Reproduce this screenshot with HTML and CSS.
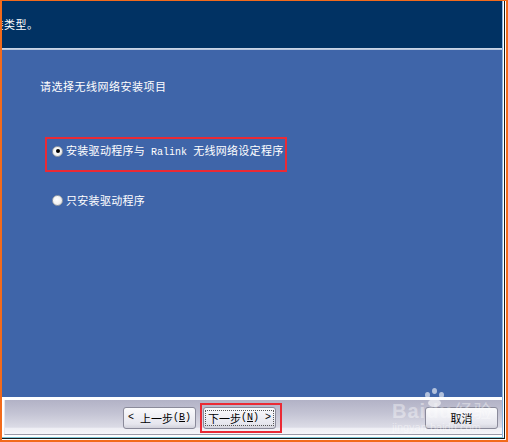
FILE: index.html
```html
<!DOCTYPE html>
<html lang="zh-CN">
<head>
<meta charset="utf-8">
<title>安装类型</title>
<link rel="stylesheet" href="styles.css">
</head>
<body>
<div class="window">
  <div class="edge1">
    <div class="edge2">
      <div class="edge3">
        <div class="panel">
          <div class="header"><span class="title">安装类型。</span></div>
          <div class="sep"></div>
          <div class="content">
            <p class="prompt">请选择无线网络安装项目</p>
            <label class="option first">
              <span class="radio checked"></span>
              <span class="label">安装驱动程序与<span class="mono"> Ralink </span>无线网络设定程序</span>
            </label>
            <label class="option second">
              <span class="radio"></span>
              <span class="label">只安装驱动程序</span>
            </label>
          </div>
          <div class="footer">
            <div class="bar">
              <button class="btn back"><span class="m">&lt; </span>上一步<span class="m">(<u>B</u>)</span></button>
              <button class="btn next"><span class="focus">下一步<span class="m">(<u>N</u>) &gt;</span></span></button>
              <button class="btn cancel">取消</button>
            </div>
          </div>
        </div>
      </div>
    </div>
  </div>
  <div class="mark mark-option"></div>
  <div class="mark mark-next"></div>
  <div class="watermark">
    <div class="paw"><i class="t1"></i><i class="t2"></i><i class="t3"></i><i class="pad"></i></div>
    <div class="wm-main">Bai<span class="du">du</span><span class="wm-cn">经验</span></div>
    <div class="wm-url">jingyan.baidu.com</div>
  </div>
</div>
</body>
</html>
```

FILE: styles.css
```css
* { box-sizing: border-box; }
html, body { margin: 0; padding: 0; }
body {
  width: 508px;
  height: 442px;
  overflow: hidden;
  background: #fff;
  font-family: "Noto Sans CJK SC", "Liberation Sans", sans-serif;
}
.window {
  position: relative;
  width: 508px;
  height: 442px;
  border-style: solid;
  border-color: #f26a1b;
  border-width: 1px 2px 2px 2px;
  display: flex;
}
.edge1 {
  flex: 1;
  display: flex;
  border-right: 1px solid #ffffff;
  border-bottom: 1px solid #ffffff;
}
.edge2 {
  flex: 1;
  display: flex;
  border-right: 1px solid #1a1a1a;
  border-bottom: 1px solid #1a1a1a;
}
.edge3 {
  flex: 1;
  display: flex;
  border-right: 1px solid #ffffff;
  border-bottom: 1px solid #7cc4d4;
}
.panel {
  flex: 1;
  display: flex;
  flex-direction: column;
  border-right: 1px solid #8ab6de;
  min-width: 0;
}
.header {
  height: 47px;
  background: #013263;
  overflow: hidden;
  padding-top: 15px;
}
.title {
  display: block;
  text-indent: -21px;
  color: #fff;
  font-size: 11px;
  letter-spacing: 0.5px;
  line-height: 16px;
  white-space: nowrap;
}
.sep {
  height: 2px;
  background: linear-gradient(#d2dcea, #aebfd8);
}
.content {
  height: 347px;
  background: #3f65a9;
  padding: 29px 0 0 38px;
  color: #fff;
}
.prompt {
  margin: 0;
  font-size: 11px;
  letter-spacing: 0.5px;
  line-height: 14px;
}
.option {
  display: flex;
  align-items: center;
  height: 14px;
  margin-left: 12px;
  font-size: 11px;
  line-height: 14px;
  letter-spacing: 0.3px;
}
.option.first { margin-top: 51px; }
.option.second { margin-top: 35px; }
.radio {
  width: 11px;
  height: 11px;
  border-radius: 50%;
  background: radial-gradient(circle at 40% 40%, #ffffff 0%, #f2f2f2 55%, #d4d4d4 100%);
  border: 1px solid #9aa0a8;
  margin-right: 3px;
  position: relative;
  flex: none;
}
.radio.checked::after {
  content: "";
  position: absolute;
  left: 2.5px;
  top: 2.5px;
  width: 4px;
  height: 4px;
  border-radius: 50%;
  background: #000;
}
.label { white-space: nowrap; }
.mono {
  font-family: "Liberation Mono", monospace;
  font-size: 10px;
  letter-spacing: 0;
  white-space: pre;
}
.footer {
  height: 40px;
  background: #ffffff;
  padding: 3px 0 2px 2px;
}
.bar {
  height: 35px;
  border-bottom: 1px solid #9a9aa8;
  background: linear-gradient(#b2b2c6 0%, #c4c4d4 40%, #dcdce6 80%, #eeeef4 83%, #f6f6fa 100%);
  display: flex;
  align-items: flex-start;
  padding: 7px 0 0 118px;
  gap: 7px;
  border-left: 1px solid #e6e6ee;
}
.btn {
  width: 73px;
  height: 22px;
  margin: 0;
  padding: 0;
  border: 1px solid #8a8a9a;
  border-radius: 3px;
  background: linear-gradient(#fafafc, #e6e6ee 80%, #d2d2dc);
  color: #000;
  font-family: "Noto Sans CJK SC", "Liberation Sans", sans-serif;
  font-size: 11px;
  line-height: 18px;
  display: flex;
  align-items: center;
  justify-content: center;
  white-space: nowrap;
}
.btn .m {
  font-family: "Liberation Mono", monospace;
  font-size: 10px;
  white-space: pre;
}
.btn u { text-decoration: underline; text-underline-offset: 1px; }
.focus {
  display: flex;
  align-items: center;
  justify-content: center;
  border: 1px dotted #555;
  width: 69px;
  height: 16px;
  white-space: nowrap;
}
.btn.cancel { margin-left: 142px; }
.mark {
  position: absolute;
  border: 2px solid #ea2a35;
}
.mark-option { left: 43px; top: 136px; width: 242px; height: 35px; }
.mark-next { left: 198px; top: 402px; width: 82px; height: 30px; }
.watermark {
  position: absolute;
  left: 388px;
  top: 386px;
  width: 100px;
  height: 50px;
  pointer-events: none;
}
.paw { position: absolute; left: 34px; top: 0; width: 22px; height: 20px; }
.paw i { position: absolute; background: rgba(255,255,255,0.6); border-radius: 50%; }
.paw .t1 { left: 1px; top: 5px; width: 5px; height: 6px; }
.paw .t2 { left: 8px; top: 1px; width: 5px; height: 6px; }
.paw .t3 { left: 15px; top: 5px; width: 5px; height: 6px; }
.paw .pad { left: 4px; top: 12px; width: 13px; height: 8px; }
.wm-main {
  position: absolute;
  left: 2px;
  top: 13px;
  font-family: "Liberation Sans", sans-serif;
  font-weight: bold;
  font-size: 20px;
  line-height: 20px;
  letter-spacing: 1px;
  color: rgba(255,255,255,0.4);
  white-space: nowrap;
}
.wm-main .du { color: rgba(255,255,255,0.3); }
.wm-cn {
  font-family: "Noto Sans CJK SC", sans-serif;
  font-weight: normal;
  font-size: 18px;
  margin-left: 2px;
}
.wm-url {
  position: absolute;
  left: 2px;
  top: 34px;
  font-family: "Liberation Sans", sans-serif;
  font-size: 11px;
  line-height: 12px;
  color: rgba(255,255,255,0.45);
  white-space: nowrap;
}
```
